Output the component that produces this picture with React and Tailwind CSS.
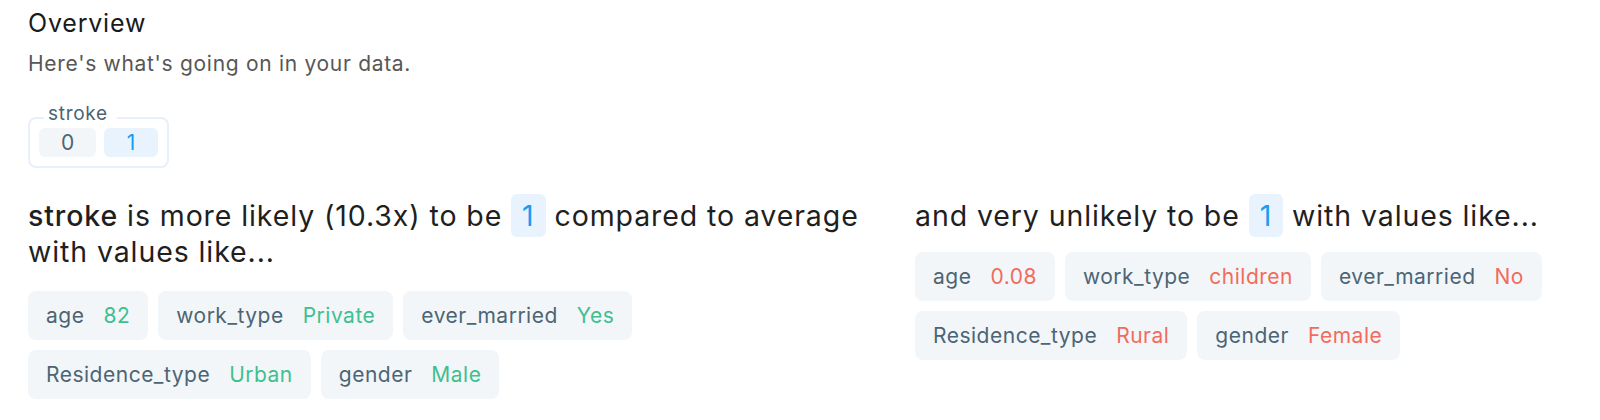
const positive = [
  { k: "age", v: "82" },
  { k: "work_type", v: "Private" },
  { k: "ever_married", v: "Yes" },
  { k: "Residence_type", v: "Urban" },
  { k: "gender", v: "Male" },
];

const negative = [
  { k: "age", v: "0.08" },
  { k: "work_type", v: "children" },
  { k: "ever_married", v: "No" },
  { k: "Residence_type", v: "Rural" },
  { k: "gender", v: "Female" },
];

function Chip({ k, v, good }) {
  return (
    <div className="flex items-center h-[49px] px-[18px] gap-[19px] rounded-lg bg-[#f3f6f9] text-[21px] tracking-[0.5px]">
      <span className="text-[#4b6575]">{k}</span>
      <span className={good ? "text-[#3fbf8f]" : "text-[#f26b5b]"}>{v}</span>
    </div>
  );
}

function Badge() {
  return (
    <span className="px-[11px] py-[4px] rounded-md bg-[#e9f3fd] text-[#1a9cf0]">1</span>
  );
}

export default function App() {
  return (
    <div className="bg-white min-h-[420px] px-[28px] pt-[7px] font-['Inter',sans-serif]">
      {/* Encabezado */}
      <h1 className="text-[25px] leading-[32px] tracking-[0.8px] text-[#1a1a1a]">Overview</h1>
      <p className="mt-[11px] text-[21px] leading-[28px] tracking-[0.7px] text-[#575757]">Here's what's going on in your data.</p>

      {/* Selector */}
      <fieldset className="mt-[31px] w-[140px] border-2 border-[#e8f0fb] rounded-lg px-[9px] pb-[9px] pt-[1px]">
        <legend className="ml-[5px] pl-[4px] pr-[9px] text-[19px] leading-[9px] pb-[9px] tracking-[0.7px] text-[#4b6575]">stroke</legend>
        <div className="flex gap-[8px]">
          <button className="w-[57px] h-[29px] rounded-md bg-[#f3f6f9] text-[#4b6575] text-[21px] leading-[29px]">0</button>
          <button className="w-[54px] h-[29px] rounded-md bg-[#e9f3fd] text-[#1a9cf0] text-[21px] leading-[29px]">1</button>
        </div>
      </fieldset>

      {/* Resultados */}
      <div className="mt-[30px] flex gap-[17px]">
        <div className="w-[870px]">
          <h2 className="text-[28.5px] leading-[36px] tracking-[0.9px] text-[#1f1f1f]">
            <span className="font-medium">stroke</span> is more likely (10.3x) to be <Badge /> compared to average with values like...
          </h2>
          <div className="mt-[21px] flex flex-wrap gap-[10px]">
            {positive.map((c) => (
              <Chip key={c.k} k={c.k} v={c.v} good />
            ))}
          </div>
        </div>
        <div className="flex-1">
          <h2 className="text-[28.5px] leading-[36px] tracking-[0.9px] text-[#1f1f1f]">
            and very unlikely to be <Badge /> with values like...
          </h2>
          <div className="mt-[18px] flex flex-wrap gap-[10px]">
            {negative.map((c) => (
              <Chip key={c.k} k={c.k} v={c.v} />
            ))}
          </div>
        </div>
      </div>
    </div>
  );
}
